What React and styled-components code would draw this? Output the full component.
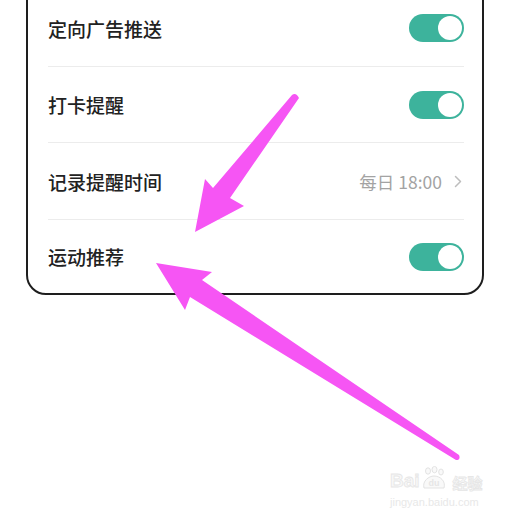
import React from 'react';
import styled, { createGlobalStyle } from 'styled-components';

const GlobalStyle = createGlobalStyle`
  html, body {
    margin: 0;
    padding: 0;
    background: #ffffff;
    overflow: hidden;
  }
  body {
    font-family: "Noto Sans CJK SC", "Noto Sans", sans-serif;
  }
`;

const Page = styled.div`
  position: relative;
  width: 508px;
  height: 519px;
  overflow: hidden;
`;

const Card = styled.div`
  margin: -12px 0 0 26px;
  width: 458px;
  box-sizing: border-box;
  border: 2px solid #1e1e1e;
  border-radius: 0 0 20px 20px;
  padding: 0 18px 0 20px;
  background: #fff;
`;

const Row = styled.div`
  display: flex;
  align-items: center;
  justify-content: space-between;
  height: ${(p) => p.$h || 76}px;
  border-bottom: ${(p) => (p.$last ? 'none' : '1px solid #ececec')};
`;

const Label = styled.span`
  font-size: 19px;
  font-weight: 500;
  color: #222;
`;

const Value = styled.div`
  display: flex;
  align-items: center;
  gap: 12px;
  font-size: 17.5px;
  color: #a3a3a3;
  margin-right: 2px;
`;

const Toggle = styled.div`
  width: 55px;
  height: 28px;
  border-radius: 14px;
  background: #3db39c;
  display: flex;
  align-items: center;
  justify-content: flex-end;
  padding: 0 2px;
  box-sizing: border-box;
`;

const Knob = styled.div`
  width: 24px;
  height: 24px;
  border-radius: 50%;
  background: #fff;
`;

const Overlay = styled.svg`
  position: absolute;
  left: 0;
  top: 0;
  pointer-events: none;
`;

const Watermark = styled.div`
  position: absolute;
  left: 390px;
  top: 466px;
  display: flex;
  flex-direction: column;
  align-items: flex-start;
  white-space: nowrap;
`;

const MarkTop = styled.div`
  display: flex;
  align-items: flex-end;
  font-family: "Liberation Sans", sans-serif;
  font-size: 19px;
  font-weight: 700;
  color: #f8f8f8;
  -webkit-text-stroke: 0.8px #e6e6e6;
  line-height: 1;
`;

const MarkCn = styled.span`
  font-family: "Noto Sans CJK SC", sans-serif;
  font-size: 15px;
  margin-left: 5px;
`;

const MarkUrl = styled.div`
  font-family: "Liberation Sans", sans-serif;
  font-size: 11px;
  color: #e8e8e8;
  margin-top: 6px;
`;

const Chevron = () => (
  <svg width="8" height="13" viewBox="0 0 8 13">
    <path d="M1.5 1.5 L6.5 6.5 L1.5 11.5" fill="none" stroke="#bdbdbd" strokeWidth="1.5" strokeLinecap="round" strokeLinejoin="round" />
  </svg>
);

const Switch = () => (
  <Toggle>
    <Knob />
  </Toggle>
);

const Paw = () => (
  <svg width="26" height="24" viewBox="0 0 26 24" style={{ margin: '0 1px' }}>
    <g fill="#f9f9f9" stroke="#e3e3e3" strokeWidth="1">
      <ellipse cx="7" cy="5" rx="2.5" ry="3.2" />
      <ellipse cx="13.5" cy="3.6" rx="2.5" ry="3.2" />
      <ellipse cx="20" cy="6" rx="2.3" ry="3" />
      <path d="M3 22 C1 15 8 10 13 10 C19 10 25 15 23 22 Z" />
    </g>
    <text x="13" y="20" textAnchor="middle" fontSize="9" fontFamily="Liberation Sans, sans-serif" fontWeight="700" fill="#e6e6e6" stroke="none">du</text>
  </svg>
);

export default function App() {
  return (
    <Page>
      <GlobalStyle />
      <Card>
        <Row $h={76}>
          <Label>定向广告推送</Label>
          <Switch />
        </Row>
        <Row $h={75}>
          <Label>打卡提醒</Label>
          <Switch />
        </Row>
        <Row $h={76}>
          <Label>记录提醒时间</Label>
          <Value>
            每日 18:00
            <Chevron />
          </Value>
        </Row>
        <Row $h={73} $last>
          <Label>运动推荐</Label>
          <Switch />
        </Row>
      </Card>

      <Watermark>
        <MarkTop>
          Bai
          <Paw />
          <MarkCn>经验</MarkCn>
        </MarkTop>
        <MarkUrl>jingyan.baidu.com</MarkUrl>
      </Watermark>

      <Overlay width="508" height="519" viewBox="0 0 508 519">
        <g fill="#f655f4" strokeLinejoin="round">
          <path d="M292 95 Q296 92 299 98 L230 198 L244 206 L195 232 L205 179 L213 188 Z" />
          <path d="M459 455 Q461 460 456 460 L190 297 L185 310 L156 263 L212 272 L202 280 Z" />
        </g>
      </Overlay>
    </Page>
  );
}
